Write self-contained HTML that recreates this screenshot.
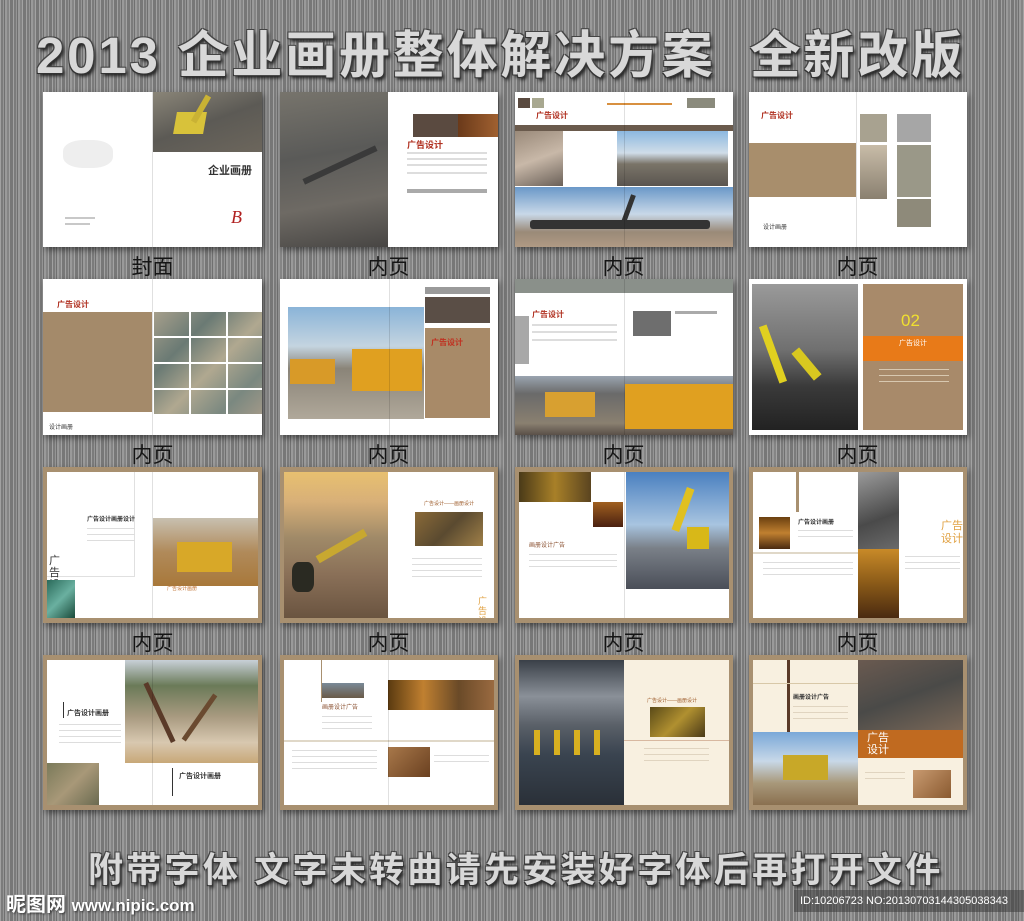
<!DOCTYPE html>
<html><head><meta charset="utf-8"><style>
*{margin:0;padding:0;box-sizing:border-box}
body{width:1024px;height:921px;overflow:hidden;position:relative;font-family:"Liberation Sans","Noto Sans CJK SC",sans-serif;
background:#8c8c8c;
background-image:repeating-linear-gradient(90deg,rgba(255,255,255,.18) 0 1px,rgba(0,0,0,.12) 1px 3px,rgba(255,255,255,.08) 3px 4px,rgba(0,0,0,.2) 4px 5px,rgba(255,255,255,.12) 5px 7px,rgba(0,0,0,.05) 7px 9px,rgba(255,255,255,.2) 9px 10px,rgba(0,0,0,.15) 10px 13px);}
.a{position:absolute}
.card{position:absolute;background:#fff;overflow:hidden;box-shadow:2px 3px 6px rgba(0,0,0,.45)}
.tan{background:#a89070}
.in{position:absolute;left:4px;top:5px;right:4px;bottom:5px;background:#fff;overflow:hidden}
.fold{position:absolute;top:0;bottom:0;width:1px;background:rgba(0,0,0,.12)}
.lbl{position:absolute;width:219px;text-align:center;font-size:21px;color:#151515;font-family:"Liberation Sans","WenQuanYi Zen Hei",sans-serif}
.t{position:absolute;height:2px;background:#c8c8c8}
.title{position:absolute;left:36px;top:14px;font-size:51px;font-weight:bold;letter-spacing:2.8px;color:#d8d8d8;white-space:nowrap;
text-shadow:-1px -1px 0 #444,1px -1px 0 #444,-1px 1px 0 #333,1px 1px 0 #333,2px 3px 3px #222}
.sm{position:absolute;font-size:8px;white-space:nowrap}
</style></head><body>

<div class="title">2013 企业画册整体解决方案&nbsp;&nbsp;全新改版</div>

<!-- ROW 1 -->
<div class="card" style="left:43px;top:92px;width:219px;height:155px">
 <div class="a" style="left:110px;top:0;width:109px;height:60px;background:linear-gradient(160deg,#8a8578,#5c5a55 50%,#6c665c)"></div>
 <div class="a" style="left:132px;top:20px;width:30px;height:22px;background:#d8c23a;transform:skew(-10deg)"></div>
 <div class="a" style="left:155px;top:2px;width:6px;height:30px;background:#c9b234;transform:rotate(30deg)"></div>
 <div class="sm" style="left:165px;top:70px;font-size:11px;font-weight:bold;color:#333">企业画册</div>
 <div class="a" style="left:20px;top:48px;width:50px;height:28px;background:#eee;border-radius:40%"></div>
 <div class="sm" style="left:188px;top:115px;font-size:18px;color:#b02020;font-family:'Liberation Serif',serif;font-style:italic">B</div>
 <div class="t" style="left:22px;top:125px;width:30px"></div><div class="t" style="left:22px;top:131px;width:25px"></div>
 <div class="fold" style="left:109px"></div>
</div>
<div class="card" style="left:280px;top:92px;width:218px;height:155px">
 <div class="a" style="left:0;top:0;width:108px;height:155px;background:linear-gradient(170deg,#77746c,#5a5a58 40%,#6e6a64 70%,#474543)"></div>
 <div class="a" style="left:20px;top:70px;width:80px;height:6px;background:#3a3a3a;transform:rotate(-25deg)"></div>
 <div class="a" style="left:133px;top:22px;width:85px;height:23px;background:#5a4a40"></div>
 <div class="a" style="left:178px;top:22px;width:40px;height:23px;background:linear-gradient(90deg,#6a3a1a,#a06030)"></div>
 <div class="sm" style="left:127px;top:46px;font-size:9px;color:#b03020;font-weight:bold">广告设计</div>
 <div class="t" style="left:127px;top:60px;width:80px;background:#ddd"></div><div class="t" style="left:127px;top:66px;width:80px;background:#ddd"></div>
 <div class="t" style="left:127px;top:72px;width:80px;background:#ddd"></div><div class="t" style="left:127px;top:80px;width:80px;background:#ddd"></div>
 <div class="a" style="left:127px;top:97px;width:80px;height:4px;background:#aaa"></div>
</div>
<div class="card" style="left:515px;top:92px;width:218px;height:155px">
 <div class="a" style="left:3px;top:6px;width:12px;height:10px;background:#5a4a40"></div>
 <div class="a" style="left:17px;top:6px;width:12px;height:10px;background:#a8a890"></div>
 <div class="a" style="left:92px;top:11px;width:65px;height:2px;background:#d89040"></div>
 <div class="a" style="left:172px;top:6px;width:28px;height:10px;background:#8a8a7c"></div>
 <div class="sm" style="left:21px;top:18px;font-size:8px;color:#b03020;font-weight:bold">广告设计</div>
 <div class="a" style="left:0;top:33px;width:218px;height:6px;background:#6a5a4c"></div>
 <div class="a" style="left:0;top:39px;width:48px;height:55px;background:linear-gradient(160deg,#9a8a7a,#c8b8a8 50%,#6a6058)"></div>
 <div class="a" style="left:102px;top:39px;width:111px;height:55px;background:linear-gradient(180deg,#8cb8e0,#d0dde8 40%,#7a7468 60%,#5a5550)"></div>
 <div class="a" style="left:0;top:95px;width:218px;height:60px;background:linear-gradient(180deg,#6a98c8,#c8d8e8 45%,#9a8a78 75%,#b09a84)"></div>
 <div class="a" style="left:15px;top:128px;width:180px;height:9px;background:#333;border-radius:3px"></div>
 <div class="a" style="left:110px;top:102px;width:5px;height:35px;background:#333;transform:rotate(20deg)"></div>
 <div class="fold" style="left:109px"></div>
</div>
<div class="card" style="left:749px;top:92px;width:218px;height:155px">
 <div class="sm" style="left:12px;top:18px;font-size:8px;color:#b03020;font-weight:bold">广告设计</div>
 <div class="a" style="left:0;top:51px;width:107px;height:54px;background:#a88e6c"></div>
 <div class="a" style="left:111px;top:22px;width:27px;height:28px;background:#a8a290"></div>
 <div class="a" style="left:148px;top:22px;width:34px;height:28px;background:#a6a6a6"></div>
 <div class="a" style="left:111px;top:53px;width:27px;height:54px;background:linear-gradient(#c8bca8,#8a8070)"></div>
 <div class="a" style="left:148px;top:53px;width:34px;height:52px;background:#9a9888"></div>
 <div class="a" style="left:148px;top:107px;width:34px;height:28px;background:#8e8a7a"></div>
 <div class="sm" style="left:14px;top:130px;font-size:6px;color:#333">设计画册</div>
 <div class="fold" style="left:107px"></div>
</div>
<div class="lbl" style="left:43px;top:251px">封面</div>
<div class="lbl" style="left:279px;top:251px">内页</div>
<div class="lbl" style="left:514px;top:251px">内页</div>
<div class="lbl" style="left:748px;top:251px">内页</div>

<!-- ROW 2 -->
<div class="card" style="left:43px;top:279px;width:219px;height:156px">
 <div class="sm" style="left:14px;top:20px;font-size:8px;color:#b03020;font-weight:bold">广告设计</div>
 <div class="a" style="left:0;top:33px;width:109px;height:100px;background:#a48a6a"></div>
 <div class="a" style="left:111px;top:31px;width:108px;height:104px;background:
 repeating-linear-gradient(90deg,transparent 0 35px,#fff 35px 37px),repeating-linear-gradient(0deg,transparent 0 24px,#fff 24px 26px),
 linear-gradient(135deg,#a8a08c,#6a7a74 30%,#b0a890 55%,#7a8880 80%,#a09888)"></div>
 <div class="sm" style="left:6px;top:143px;font-size:6px;color:#333">设计画册</div>
 <div class="fold" style="left:109px"></div>
</div>
<div class="card" style="left:280px;top:279px;width:218px;height:156px">
 <div class="a" style="left:8px;top:28px;width:136px;height:112px;background:linear-gradient(180deg,#8ab4d8,#c4d4e0 35%,#8a8478 55%,#b0a89a)"></div>
 <div class="a" style="left:72px;top:70px;width:70px;height:42px;background:#e0a020"></div>
 <div class="a" style="left:10px;top:80px;width:45px;height:25px;background:#d89a28"></div>
 <div class="a" style="left:145px;top:8px;width:65px;height:7px;background:#9a9a9a"></div>
 <div class="a" style="left:145px;top:18px;width:65px;height:26px;background:#5a4e46"></div>
 <div class="a" style="left:145px;top:49px;width:65px;height:90px;background:#a88a68"></div>
 <div class="sm" style="left:151px;top:58px;font-size:8px;color:#c03020;font-weight:bold">广告设计</div>
 <div class="fold" style="left:109px"></div>
</div>
<div class="card" style="left:515px;top:279px;width:218px;height:156px">
 <div class="a" style="left:0;top:0;width:218px;height:14px;background:#8a908a"></div>
 <div class="a" style="left:0;top:37px;width:14px;height:48px;background:#a8a8a8"></div>
 <div class="sm" style="left:17px;top:30px;font-size:8px;color:#b03020;font-weight:bold">广告设计</div>
 <div class="t" style="left:17px;top:45px;width:85px;background:#ddd"></div><div class="t" style="left:17px;top:52px;width:85px;background:#ddd"></div><div class="t" style="left:17px;top:60px;width:85px;background:#ddd"></div>
 <div class="a" style="left:118px;top:32px;width:38px;height:25px;background:#6e6e6e"></div>
 <div class="a" style="left:160px;top:32px;width:42px;height:3px;background:#aaa"></div>
 <div class="a" style="left:0;top:97px;width:218px;height:59px;background:linear-gradient(180deg,#9aa4b0,#6a6a6a 30%,#8a8070 80%,#5a5048)"></div>
 <div class="a" style="left:110px;top:105px;width:108px;height:45px;background:#e0a020"></div>
 <div class="a" style="left:30px;top:113px;width:50px;height:25px;background:#d8a030"></div>
 <div class="fold" style="left:109px"></div>
</div>
<div class="card" style="left:749px;top:279px;width:218px;height:156px">
 <div class="a" style="left:3px;top:5px;width:106px;height:146px;background:linear-gradient(180deg,#9a9a9a,#707070 45%,#3a3a3a 70%,#222)"></div>
 <div class="a" style="left:20px;top:45px;width:8px;height:60px;background:#e0d020;transform:rotate(-20deg)"></div>
 <div class="a" style="left:40px;top:80px;width:35px;height:10px;background:#d8c820;transform:rotate(50deg)"></div>
 <div class="a" style="left:114px;top:5px;width:100px;height:146px;background:#a88a6a"></div>
 <div class="sm" style="left:152px;top:32px;font-size:17px;color:#f0e030">02</div>
 <div class="a" style="left:114px;top:57px;width:100px;height:25px;background:#e87a18"></div>
 <div class="sm" style="left:150px;top:59px;font-size:7px;color:#fff">广告设计</div>
 <div class="t" style="left:130px;top:90px;width:70px;background:#d8c8b0;height:1px"></div><div class="t" style="left:130px;top:96px;width:70px;background:#d8c8b0;height:1px"></div><div class="t" style="left:130px;top:102px;width:70px;background:#d8c8b0;height:1px"></div>
</div>
<div class="lbl" style="left:43px;top:439px">内页</div>
<div class="lbl" style="left:279px;top:439px">内页</div>
<div class="lbl" style="left:514px;top:439px">内页</div>
<div class="lbl" style="left:748px;top:439px">内页</div>

<!-- ROW 3 -->
<div class="card tan" style="left:43px;top:467px;width:219px;height:156px"><div class="in">
 <div class="a" style="left:0;top:0;width:88px;height:105px;background:#fff;border-right:1px solid #e0e0e0;border-bottom:1px solid #e0e0e0"></div>
 <div class="sm" style="left:40px;top:42px;font-size:6px;color:#333;font-weight:bold">广告设计画册设计</div>
 <div class="t" style="left:40px;top:56px;width:48px;background:#ddd;height:1px"></div><div class="t" style="left:40px;top:62px;width:48px;background:#ddd;height:1px"></div><div class="t" style="left:40px;top:68px;width:48px;background:#ddd;height:1px"></div>
 <div class="sm" style="left:2px;top:83px;font-size:11px;color:#333;line-height:12px;white-space:normal;width:14px">广告设计</div>
 <div class="a" style="left:0;top:108px;width:28px;height:38px;background:linear-gradient(135deg,#2a6a5a,#6ab0a0,#1a4a3a)"></div>
 <div class="a" style="left:106px;top:46px;width:105px;height:68px;background:linear-gradient(180deg,#c8c0b0,#b08a5a 50%,#a8783a)"></div>
 <div class="a" style="left:130px;top:70px;width:55px;height:30px;background:#d8a828"></div>
 <div class="sm" style="left:120px;top:113px;font-size:5px;color:#c07030">广告设计画册</div>
 <div class="fold" style="left:105px"></div>
</div></div>
<div class="card tan" style="left:280px;top:467px;width:218px;height:156px"><div class="in">
 <div class="a" style="left:0;top:0;width:104px;height:146px;background:linear-gradient(180deg,#e8c070,#d8b078 20%,#a08a68 45%,#8a7058 70%,#6a5440)"></div>
 <div class="a" style="left:30px;top:70px;width:55px;height:8px;background:#c8a830;transform:rotate(-30deg)"></div>
 <div class="a" style="left:8px;top:90px;width:22px;height:30px;background:#2a2a22;border-radius:30%"></div>
 <div class="sm" style="left:140px;top:28px;font-size:5px;color:#a06030">广告设计——画册设计</div>
 <div class="a" style="left:131px;top:40px;width:68px;height:34px;background:linear-gradient(135deg,#8a6a38,#5a4a30,#a08048)"></div>
 <div class="t" style="left:128px;top:86px;width:70px;background:#ddd;height:1px"></div><div class="t" style="left:128px;top:92px;width:70px;background:#ddd;height:1px"></div><div class="t" style="left:128px;top:98px;width:70px;background:#ddd;height:1px"></div><div class="t" style="left:128px;top:104px;width:70px;background:#ddd;height:1px"></div>
 <div class="sm" style="left:194px;top:124px;font-size:9px;color:#e0a040;line-height:10px;white-space:normal;width:12px">广告设计</div>
</div></div>
<div class="card tan" style="left:515px;top:467px;width:218px;height:156px"><div class="in">
 <div class="a" style="left:0;top:0;width:72px;height:30px;background:linear-gradient(90deg,#4a3a18,#a88028,#5a4420)"></div>
 <div class="a" style="left:74px;top:30px;width:30px;height:25px;background:linear-gradient(#a06020,#4a2010)"></div>
 <div class="sm" style="left:10px;top:68px;font-size:6px;color:#8a5030">画册设计广告</div>
 <div class="t" style="left:10px;top:82px;width:88px;background:#ddd;height:1px"></div><div class="t" style="left:10px;top:88px;width:88px;background:#ddd;height:1px"></div><div class="t" style="left:10px;top:94px;width:88px;background:#ddd;height:1px"></div>
 <div class="a" style="left:107px;top:0;width:104px;height:117px;background:linear-gradient(180deg,#4a80c0,#a8c4e0 45%,#7a8088 65%,#4a4e58)"></div>
 <div class="a" style="left:160px;top:15px;width:8px;height:45px;background:#e0c020;transform:rotate(20deg)"></div>
 <div class="a" style="left:168px;top:55px;width:22px;height:22px;background:#d8b818"></div>
 <div class="fold" style="left:105px"></div>
</div></div>
<div class="card tan" style="left:749px;top:467px;width:218px;height:156px"><div class="in">
 <div class="a" style="left:43px;top:0;width:3px;height:40px;background:#a89070"></div>
 <div class="a" style="left:6px;top:45px;width:31px;height:32px;background:linear-gradient(#6a4010,#c08030,#4a2a10)"></div>
 <div class="sm" style="left:45px;top:45px;font-size:6px;color:#333;font-weight:bold">广告设计画册</div>
 <div class="t" style="left:45px;top:58px;width:55px;background:#ddd;height:1px"></div><div class="t" style="left:45px;top:64px;width:55px;background:#ddd;height:1px"></div>
 <div class="a" style="left:0;top:80px;width:105px;height:2px;background:#e0d8c8"></div>
 <div class="t" style="left:10px;top:90px;width:90px;background:#ddd;height:1px"></div><div class="t" style="left:10px;top:96px;width:90px;background:#ddd;height:1px"></div><div class="t" style="left:10px;top:102px;width:90px;background:#ddd;height:1px"></div>
 <div class="a" style="left:105px;top:0;width:41px;height:77px;background:linear-gradient(160deg,#9a9a9a,#4a4a4a 60%,#6a6a6a)"></div>
 <div class="a" style="left:105px;top:77px;width:41px;height:69px;background:linear-gradient(180deg,#c88a28,#8a5a18 50%,#4a2a10)"></div>
 <div class="sm" style="left:186px;top:48px;font-size:11px;color:#e0a040;line-height:13px;white-space:normal;width:24px;text-align:right">广告设计</div>
 <div class="t" style="left:152px;top:84px;width:55px;background:#ddd;height:1px"></div><div class="t" style="left:152px;top:90px;width:55px;background:#ddd;height:1px"></div><div class="t" style="left:152px;top:96px;width:55px;background:#ddd;height:1px"></div>
</div></div>
<div class="lbl" style="left:43px;top:627px">内页</div>
<div class="lbl" style="left:279px;top:627px">内页</div>
<div class="lbl" style="left:514px;top:627px">内页</div>
<div class="lbl" style="left:748px;top:627px">内页</div>

<!-- ROW 4 -->
<div class="card tan" style="left:43px;top:655px;width:219px;height:155px"><div class="in">
 <div class="sm" style="left:20px;top:48px;font-size:7px;color:#333;font-weight:bold">广告设计画册</div>
 <div class="a" style="left:16px;top:42px;width:1px;height:16px;background:#333"></div>
 <div class="t" style="left:12px;top:64px;width:62px;background:#ddd;height:1px"></div><div class="t" style="left:12px;top:70px;width:62px;background:#ddd;height:1px"></div><div class="t" style="left:12px;top:76px;width:62px;background:#ddd;height:1px"></div><div class="t" style="left:12px;top:82px;width:62px;background:#ddd;height:1px"></div>
 <div class="a" style="left:78px;top:0;width:133px;height:103px;background:linear-gradient(180deg,#c8d0d8,#6a7a58 25%,#a89a80 55%,#d8c8b0 80%,#c8a878)"></div>
 <div class="a" style="left:110px;top:20px;width:5px;height:65px;background:#5a3a28;transform:rotate(-25deg)"></div>
 <div class="a" style="left:150px;top:30px;width:5px;height:55px;background:#6a4a30;transform:rotate(35deg)"></div>
 <div class="a" style="left:0;top:103px;width:52px;height:42px;background:linear-gradient(135deg,#7a7a5a,#a89878,#6a6a50)"></div>
 <div class="sm" style="left:132px;top:111px;font-size:7px;color:#333;font-weight:bold">广告设计画册</div>
 <div class="a" style="left:125px;top:108px;width:1px;height:28px;background:#333"></div>
 <div class="fold" style="left:105px"></div>
</div></div>
<div class="card tan" style="left:280px;top:655px;width:218px;height:155px"><div class="in">
 <div class="a" style="left:37px;top:0;width:1px;height:42px;background:#a89070"></div>
 <div class="a" style="left:38px;top:23px;width:42px;height:15px;background:linear-gradient(#7a8a98,#6a5a48)"></div>
 <div class="sm" style="left:38px;top:42px;font-size:6px;color:#8a5030">画册设计广告</div>
 <div class="t" style="left:38px;top:56px;width:50px;background:#ddd;height:1px"></div><div class="t" style="left:38px;top:62px;width:50px;background:#ddd;height:1px"></div><div class="t" style="left:38px;top:68px;width:50px;background:#ddd;height:1px"></div>
 <div class="a" style="left:104px;top:20px;width:106px;height:30px;background:linear-gradient(90deg,#5a3a10,#c08030,#6a4a28,#9a6a40)"></div>
 <div class="a" style="left:0;top:80px;width:210px;height:2px;background:#e0d8c8"></div>
 <div class="t" style="left:8px;top:90px;width:85px;background:#ddd;height:1px"></div><div class="t" style="left:8px;top:96px;width:85px;background:#ddd;height:1px"></div><div class="t" style="left:8px;top:102px;width:85px;background:#ddd;height:1px"></div><div class="t" style="left:8px;top:108px;width:85px;background:#ddd;height:1px"></div>
 <div class="a" style="left:104px;top:87px;width:42px;height:30px;background:linear-gradient(135deg,#a8784a,#6a4020)"></div>
 <div class="t" style="left:150px;top:95px;width:55px;background:#ddd;height:1px"></div><div class="t" style="left:150px;top:101px;width:55px;background:#ddd;height:1px"></div>
 <div class="fold" style="left:104px"></div>
</div></div>
<div class="card tan" style="left:515px;top:655px;width:218px;height:155px"><div class="in" style="background:#f8f0e0">
 <div class="a" style="left:0;top:0;width:105px;height:145px;background:linear-gradient(180deg,#3a4048,#8a9098 25%,#5a6068 45%,#3a4450 65%,#2a3038 100%)"></div>
 <div class="a" style="left:15px;top:70px;width:80px;height:25px;background:repeating-linear-gradient(90deg,#d8b020 0 6px,transparent 6px 20px)"></div>
 <div class="sm" style="left:128px;top:37px;font-size:5px;color:#a06030">广告设计——画册设计</div>
 <div class="a" style="left:131px;top:47px;width:55px;height:30px;background:linear-gradient(135deg,#5a4a18,#b09030,#4a3a18)"></div>
 <div class="a" style="left:105px;top:80px;width:106px;height:1px;background:#d8b8a0"></div>
 <div class="t" style="left:125px;top:88px;width:65px;background:#e0d4c0;height:1px"></div><div class="t" style="left:125px;top:94px;width:65px;background:#e0d4c0;height:1px"></div><div class="t" style="left:125px;top:100px;width:65px;background:#e0d4c0;height:1px"></div>
</div></div>
<div class="card tan" style="left:749px;top:655px;width:218px;height:155px"><div class="in" style="background:#f8f0e0">
 <div class="a" style="left:34px;top:0;width:3px;height:72px;background:#5a3a28"></div>
 <div class="a" style="left:0;top:23px;width:105px;height:1px;background:#d8c8a8"></div>
 <div class="sm" style="left:40px;top:32px;font-size:6px;color:#333;font-weight:bold">画册设计广告</div>
 <div class="t" style="left:40px;top:46px;width:55px;background:#e0d4c0;height:1px"></div><div class="t" style="left:40px;top:52px;width:55px;background:#e0d4c0;height:1px"></div><div class="t" style="left:40px;top:58px;width:55px;background:#e0d4c0;height:1px"></div>
 <div class="a" style="left:105px;top:0;width:106px;height:70px;background:linear-gradient(160deg,#6a5a50,#4a4a48 50%,#7a6858)"></div>
 <div class="a" style="left:105px;top:70px;width:106px;height:28px;background:#c06a20"></div>
 <div class="sm" style="left:114px;top:72px;font-size:11px;color:#fff;line-height:12px;white-space:normal;width:24px">广告设计</div>
 <div class="a" style="left:0;top:72px;width:105px;height:73px;background:linear-gradient(180deg,#7aa8d8,#c8d8e8 40%,#a8987a 70%,#8a7050)"></div>
 <div class="a" style="left:30px;top:95px;width:45px;height:25px;background:#c8a828"></div>
 <div class="a" style="left:160px;top:110px;width:38px;height:28px;background:linear-gradient(135deg,#c89a70,#8a5a30)"></div>
 <div class="t" style="left:112px;top:112px;width:40px;background:#e0d4c0;height:1px"></div><div class="t" style="left:112px;top:118px;width:40px;background:#e0d4c0;height:1px"></div>
</div></div>

<div class="title" style="left:88px;top:842px;font-size:35px;letter-spacing:3.3px">附带字体 文字未转曲请先安装好字体后再打开文件</div>

<div class="sm" style="left:6px;top:888px;font-size:20px;color:#fff;font-weight:bold;text-shadow:1px 1px 2px #333">昵图网 <span style="font-size:17px">www.nipic.com</span></div>
<div class="a" style="left:794px;top:890px;width:230px;height:22px;background:rgba(60,60,60,.55)"></div>
<div class="sm" style="left:800px;top:895px;font-size:11px;color:#fff">ID:10206723 NO:20130703144305038343</div>
</body></html>
